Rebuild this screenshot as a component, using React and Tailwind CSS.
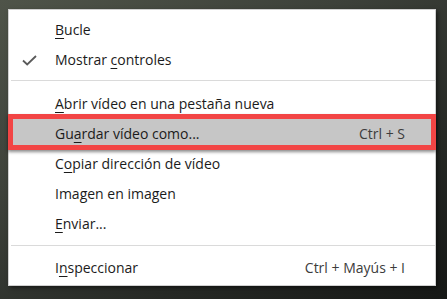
import React from "react";

const U = ({ children }) => <span className="underline underline-offset-[3px] decoration-1">{children}</span>;

function Row({ children, shortcut, check, highlight }) {
  return (
    <div className={"relative flex items-center h-[30px] pl-[46px] pr-[30px] " + (highlight ? "bg-[#c6c6c6]" : "")}>
      {check && (
        <svg className="absolute left-[13px] top-[10px]" width="15" height="11" viewBox="0 0 15 11">
          <path d="M1 5.5 L5.2 9.5 L14 1" fill="none" stroke="#5a5a5a" strokeWidth="1.8" />
        </svg>
      )}
      <span className="flex-1 text-[#1b1b1b]">{children}</span>
      {shortcut && <span className="text-[#3c3c3c]">{shortcut}</span>}
      {highlight && (
        <div className="absolute left-[-1px] right-[-1px] top-[-5px] bottom-[-1px] border-[5px] border-[#f24545] shadow-[0_2px_3px_rgba(0,0,0,0.45)]" />
      )}
    </div>
  );
}

export default function App() {
  return (
    <div
      className="w-[447px] h-[299px] overflow-hidden bg-[linear-gradient(150deg,#4f5449_0%,#3d413a_35%,#262925_70%,#161816_100%)] pt-[9px] pl-[8px]"
      style={{ fontFamily: '"Segoe UI", "Open Sans", "Noto Sans", sans-serif' }}
    >
      <div className="w-[428px] h-[277px] bg-white border border-[#d0d0d0] shadow-[2px_2px_4px_rgba(0,0,0,0.5)] pt-[5px] text-[14px] leading-none">
        <Row><U>B</U>ucle</Row>
        <Row check>Mostrar <U>c</U>ontroles</Row>
        <div className="pt-[5px] pb-[8px] pl-[2px]"><div className="h-px bg-[#dadada]" /></div>
        <Row><U>A</U>brir vídeo en una pestaña nueva</Row>
        <Row highlight shortcut="Ctrl + S">Gu<U>a</U>rdar vídeo como...</Row>
        <Row>C<U>o</U>piar dirección de vídeo</Row>
        <Row>Imagen en imagen</Row>
        <Row><U>E</U>nviar...</Row>
        <div className="pt-[6px] pb-[7px] pl-[2px]"><div className="h-px bg-[#dadada]" /></div>
        <Row shortcut="Ctrl + Mayús + I">I<U>n</U>speccionar</Row>
      </div>
    </div>
  );
}
